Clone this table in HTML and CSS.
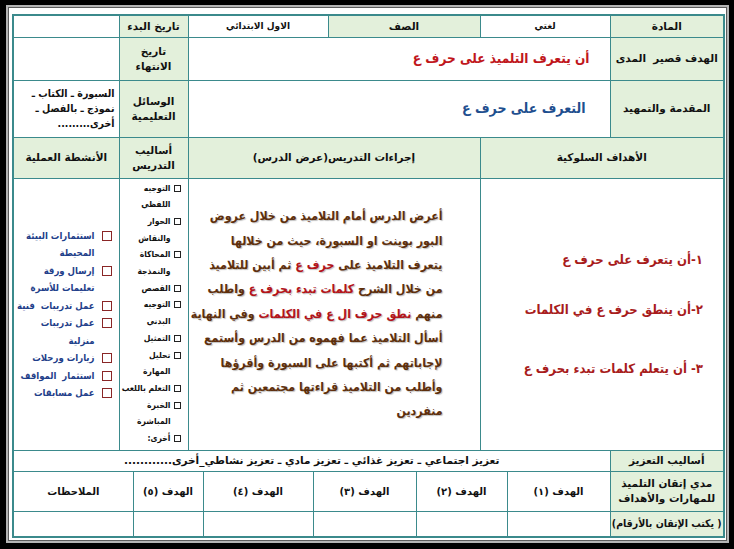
FILE: index.html
```html
<!DOCTYPE html>
<html lang="ar" dir="rtl">
<head>
<meta charset="utf-8">
<title>تحضير درس</title>
<link rel="stylesheet" href="styles.css">
</head>
<body>
<div class="page">
  <div class="sheet">
    <div class="frame">
      <table class="plan top">
        <colgroup>
          <col class="w113"><col class="w130"><col class="w152"><col class="w140"><col class="w69"><col class="w105">
        </colgroup>
        <tr class="r1">
          <th class="h">المادة</th>
          <td class="sm">لغتي</td>
          <th class="h">الصف</th>
          <td class="sm">الاول الابتدائي</td>
          <th class="h">تاريخ البدء</th>
          <td></td>
        </tr>
        <tr class="r2">
          <th class="h">الهدف قصير&nbsp; المدى</th>
          <td colspan="3" class="big red">أن يتعرف التلميذ على حرف ع</td>
          <th class="h">تاريخ<br>الانتهاء</th>
          <td></td>
        </tr>
        <tr class="r3">
          <th class="h">المقدمة والتمهيد</th>
          <td colspan="3" class="big blue">التعرف على حرف ع</td>
          <th class="h">الوسائل<br>التعليمية</th>
          <td class="tools">السبورة ـ الكتاب ـ<br>نموذج ـ بالفصل ـ<br>أخرى.........</td>
        </tr>
        <tr class="r4">
          <th class="h" colspan="2">الأهداف السلوكية</th>
          <th class="h" colspan="2">إجراءات التدريس(عرض الدرس)</th>
          <th class="h">أساليب<br>التدريس</th>
          <th class="h">الأنشطة العملية</th>
        </tr>
        <tr class="r5">
          <td colspan="2" class="goals">
            <div class="goal g1">١-أن يتعرف على حرف ع</div>
            <div class="goal g2">٢-أن ينطق حرف ع في الكلمات</div>
            <div class="goal g3">٣- أن يتعلم كلمات تبدء بحرف ع</div>
          </td>
          <td colspan="2" class="proc">
            <div class="proc-text">
              <span class="ln">أعرض الدرس أمام التلاميذ من خلال عروض</span>
              <span class="ln">البور بوينت او السبورة، حيث من خلالها</span>
              <span class="ln">يتعرف التلاميذ على <span class="hl">حرف ع</span> ثم أبين للتلاميذ</span>
              <span class="ln">من خلال الشرح <span class="hl">كلمات تبدء بحرف ع</span> واطلب</span>
              <span class="ln">منهم <span class="hl">نطق حرف ال ع في الكلمات</span> وفي النهاية</span>
              <span class="ln">أسأل التلاميذ عما فهموه من الدرس وأستمع</span>
              <span class="ln">لإجاباتهم ثم أكتبها على السبورة وأقرؤها</span>
              <span class="ln">وأطلب من التلاميذ قراءتها مجتمعين ثم</span>
              <span class="ln">منفردين</span>
            </div>
          </td>
          <td class="methods">
            <div class="m-item"><span class="box"></span><span>التوجيه<br>اللفظي</span></div>
            <div class="m-item"><span class="box"></span><span>الحوار<br>والنقاش</span></div>
            <div class="m-item"><span class="box"></span><span>المحاكاة<br>والنمذجة</span></div>
            <div class="m-item"><span class="box"></span><span>القصص</span></div>
            <div class="m-item"><span class="box"></span><span>التوجيه<br>البدني</span></div>
            <div class="m-item"><span class="box"></span><span>التمثيل</span></div>
            <div class="m-item"><span class="box"></span><span>تحليل<br>المهارة</span></div>
            <div class="m-item"><span class="box"></span><span>التعلم باللعب</span></div>
            <div class="m-item"><span class="box"></span><span>الخبرة<br>المباشرة</span></div>
            <div class="m-item"><span class="box"></span><span>أخرى:</span></div>
          </td>
          <td class="acts">
            <div class="a-item"><span class="rbox"></span><span>استثمارات البيئة<br>المحيطة</span></div>
            <div class="a-item"><span class="rbox"></span><span>إرسال ورقة<br>تعليمات للأسرة</span></div>
            <div class="a-item"><span class="rbox"></span><span>عمل تدريبات&nbsp; فنية</span></div>
            <div class="a-item"><span class="rbox"></span><span>عمل تدريبات<br>منزلية</span></div>
            <div class="a-item"><span class="rbox"></span><span>زيارات ورحلات</span></div>
            <div class="a-item"><span class="rbox"></span><span>استثمار&nbsp; المواقف</span></div>
            <div class="a-item"><span class="rbox"></span><span>عمل مسابقات</span></div>
          </td>
        </tr>
        <tr class="r6">
          <th class="h">أساليب التعزيز</th>
          <td colspan="5" class="reinf">تعزيز اجتماعي ـ تعزيز غذائي ـ تعزيز مادي ـ تعزيز نشاطي_أخرى............</td>
        </tr>
      </table>
      <table class="plan bottom">
        <colgroup>
          <col class="w113"><col class="w103"><col class="w91"><col class="w103"><col class="w110"><col class="w70"><col class="w119">
        </colgroup>
        <tr class="r7">
          <th class="h">مدي إتقان التلميذ<br>للمهارات والأهداف</th>
          <td>الهدف (١)</td>
          <td>الهدف (٢)</td>
          <td>الهدف (٣)</td>
          <td>الهدف (٤)</td>
          <td>الهدف (٥)</td>
          <td>الملاحظات</td>
        </tr>
        <tr class="r8">
          <th class="h note">( يكتب الإتقان بالأرقام)</th>
          <td></td><td></td><td></td><td></td><td></td><td></td>
        </tr>
      </table>
    </div>
  </div>
</div>
</body>
</html>
```

FILE: styles.css
```css
* { box-sizing: border-box; }
html, body { margin: 0; padding: 0; }
body {
  background: #000;
  font-family: "DejaVu Sans", "Liberation Sans", sans-serif;
}
.page {
  width: 734px;
  height: 549px;
  padding: 5px 5px 6px 6px;
  background: #000;
}
.sheet {
  height: 100%;
  background: #fff;
  border: 2px solid #b4b4b4;
  box-shadow: inset 0 0 0 1px #5c5c5c;
  padding: 7px 2px 4px 4px;
}
.frame {
  border: 2px solid #3b8a8c;
  width: 713px;
}
.plan {
  border-collapse: collapse;
  table-layout: fixed;
  width: 709px;
  border: hidden;
}
.top { border-bottom: 1px solid #3b8a8c; }
.w113 { width: 113px; }
.w130 { width: 130px; }
.w152 { width: 152px; }
.w140 { width: 140px; }
.w69 { width: 69px; }
.w105 { width: 105px; }
.w103 { width: 103px; }
.w91 { width: 91px; }
.w110 { width: 110px; }
.w70 { width: 70px; }
.w119 { width: 119px; }

.plan th, .plan td {
  border: 1px solid #3b8a8c;
  padding: 0 3px;
  text-align: center;
  vertical-align: middle;
  font-weight: bold;
  font-size: 10.5px;
  line-height: 15px;
  color: #111;
  white-space: nowrap;
  overflow: hidden;
}
.plan .h { background: #e3f0db; }
.plan .sm { font-size: 9px; }

.r1 { height: 21px; }
.r2 { height: 43px; }
.r3 { height: 57px; }
.r4 { height: 41px; }
.r5 { height: 272px; }
.r6 { height: 21px; }
.r7 { height: 40px; }
.r8 { height: 24px; }

.r7 td { font-size: 10px; }

.plan .big,
.plan .goals,
.plan .proc,
.plan .methods,
.plan .acts,
.plan .tools,
.plan .note {
  font-family: "DejaVu Sans Condensed", "DejaVu Sans", sans-serif;
  font-stretch: condensed;
}

.plan .big {
  text-align: right;
  padding-right: 20px;
  font-size: 13.5px;
}
.plan .red { color: #c0161c; }
.plan .blue { color: #1f4f8f; padding-right: 24px; font-size: 14px; }

.plan .tools {
  text-align: right;
  padding-right: 4px;
  line-height: 15px;
  font-size: 10.5px;
}

.plan .goals {
  text-align: right;
  padding-right: 20px;
}
.goal {
  color: #a81c1c;
  font-size: 13px;
  line-height: 18px;
}
.g2 { margin-top: 32px; }
.g3 { margin-top: 41px; }

.plan .proc {
  padding: 0 37px 0 2px;
  text-align: right;
}
.proc-text {
  color: #5e2f0c;
  font-size: 12.3px;
  line-height: 24.4px;
  text-shadow: 1px 1px 1px rgba(0, 0, 0, 0.25);
}
.ln { display: block; }
.hl { color: #b3141a; }

.plan .methods {
  text-align: right;
  vertical-align: top;
  padding: 1px 7px 0 0;
  font-size: 8.5px;
  line-height: 16.7px;
}
.m-item {
  display: flex;
  align-items: flex-start;
  gap: 3px;
}
.box {
  flex: none;
  width: 7px;
  height: 7px;
  border: 1px solid #222;
  margin-top: 5px;
  background: #fff;
}

.plan .acts {
  text-align: right;
  padding: 0 7px 0 0;
  font-size: 9.5px;
  line-height: 17.5px;
  color: #1f3f8a;
}
.a-item {
  display: flex;
  align-items: flex-start;
  gap: 7px;
}
.rbox {
  flex: none;
  width: 10px;
  height: 10px;
  border: 1.5px solid #8a2626;
  margin-top: 4px;
  background: #fff;
}

.plan .reinf { font-size: 10.5px; }
.plan .note { font-size: 10.5px; padding: 0; }
```
